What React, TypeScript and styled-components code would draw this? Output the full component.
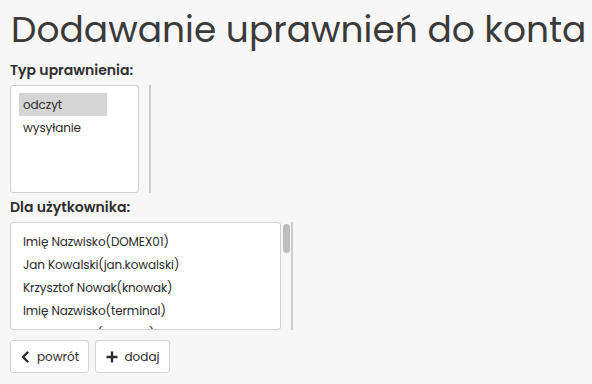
import React, { FC } from "react";
import styled, { createGlobalStyle } from "styled-components";

const GlobalStyles = createGlobalStyle`
html, body {
    margin: 0;
    padding: 0;
    background: #f7f7f7;
}
body {
    font-family: Poppins, Inter, "Noto Sans", sans-serif;
    color: #333;
}
`;

const Page = styled.div`
    padding: 0 10px;
`;

const Title = styled.h1`
    margin: 0 0 0 1px;
    padding-top: 7px;
    font-size: 36px;
    line-height: 46px;
    font-weight: 400;
    color: #3a3a3a;
    white-space: nowrap;
`;

const Label = styled.div<{ $gap: number }>`
    margin-top: ${(p) => p.$gap}px;
    font-size: 14px;
    line-height: 18px;
    font-weight: 600;
    color: #2e2e2e;
`;

const ListWrap = styled.div`
    display: flex;
    margin-top: 6px;
    height: 108px;
`;

const ListBox = styled.div<{ $width: number }>`
    width: ${(p) => p.$width}px;
    box-sizing: border-box;
    background: #fff;
    border: 1px solid #cfcfcf;
    border-radius: 3px;
    padding: 7px 8px;
    overflow: hidden;
`;

const Gutter = styled.div`
    position: relative;
    width: 10px;
    border-right: 2px solid #cdcdcd;
`;

const Thumb = styled.div`
    position: absolute;
    left: 2px;
    top: 2px;
    width: 7px;
    height: 29px;
    border-radius: 4px;
    background: #bdbdbd;
`;

const Option = styled.div<{ $selected?: boolean }>`
    width: 88px;
    height: 23px;
    line-height: 23px;
    padding-left: 4px;
    box-sizing: border-box;
    white-space: nowrap;
    font-size: 12px;
    letter-spacing: -0.1px;
    color: #2b2b2b;
    background: ${(p) => (p.$selected ? "#d5d5d5" : "transparent")};
`;

const Buttons = styled.div`
    display: flex;
    gap: 6px;
    margin-top: 10px;
`;

const Button = styled.button<{ $width: number }>`
    display: flex;
    align-items: center;
    justify-content: center;
    gap: 7px;
    width: ${(p) => p.$width}px;
    height: 33px;
    padding: 0;
    background: #fff;
    border: 1px solid #d4d4d4;
    border-radius: 3px;
    font-family: inherit;
    font-size: 12px;
    color: #2b2b2b;
    svg {
        display: block;
    }
`;

const users = [
    "Imię Nazwisko(DOMEX01)",
    "Jan Kowalski(jan.kowalski)",
    "Krzysztof Nowak(knowak)",
    "Imię Nazwisko(terminal)",
    "Anna Nowak(anowak)",
];

const App: FC = () => {
    return (
        <>
            <GlobalStyles />
            <Page>
                <Title>Dodawanie uprawnień do konta</Title>

                <Label $gap={8}>Typ uprawnienia:</Label>
                <ListWrap>
                    <ListBox $width={129}>
                        <Option $selected>odczyt</Option>
                        <Option>wysyłanie</Option>
                    </ListBox>
                    <Gutter />
                </ListWrap>

                <Label $gap={5}>Dla użytkownika:</Label>
                <ListWrap>
                    <ListBox $width={271}>
                        {users.map((u) => (
                            <Option key={u}>{u}</Option>
                        ))}
                    </ListBox>
                    <Gutter>
                        <Thumb />
                    </Gutter>
                </ListWrap>

                <Buttons>
                    <Button $width={79}>
                        <svg width="10" height="12" viewBox="0 0 10 12">
                            <path d="M7.5 1.5 L3 6 L7.5 10.5" fill="none" stroke="#2b2b2b" strokeWidth="2.4" strokeLinecap="round" strokeLinejoin="round" />
                        </svg>
                        powrót
                    </Button>
                    <Button $width={75}>
                        <svg width="12" height="12" viewBox="0 0 12 12">
                            <path d="M6 0.5 V11.5 M0.5 6 H11.5" fill="none" stroke="#2b2b2b" strokeWidth="2.4" />
                        </svg>
                        dodaj
                    </Button>
                </Buttons>
            </Page>
        </>
    );
};

export default App;
